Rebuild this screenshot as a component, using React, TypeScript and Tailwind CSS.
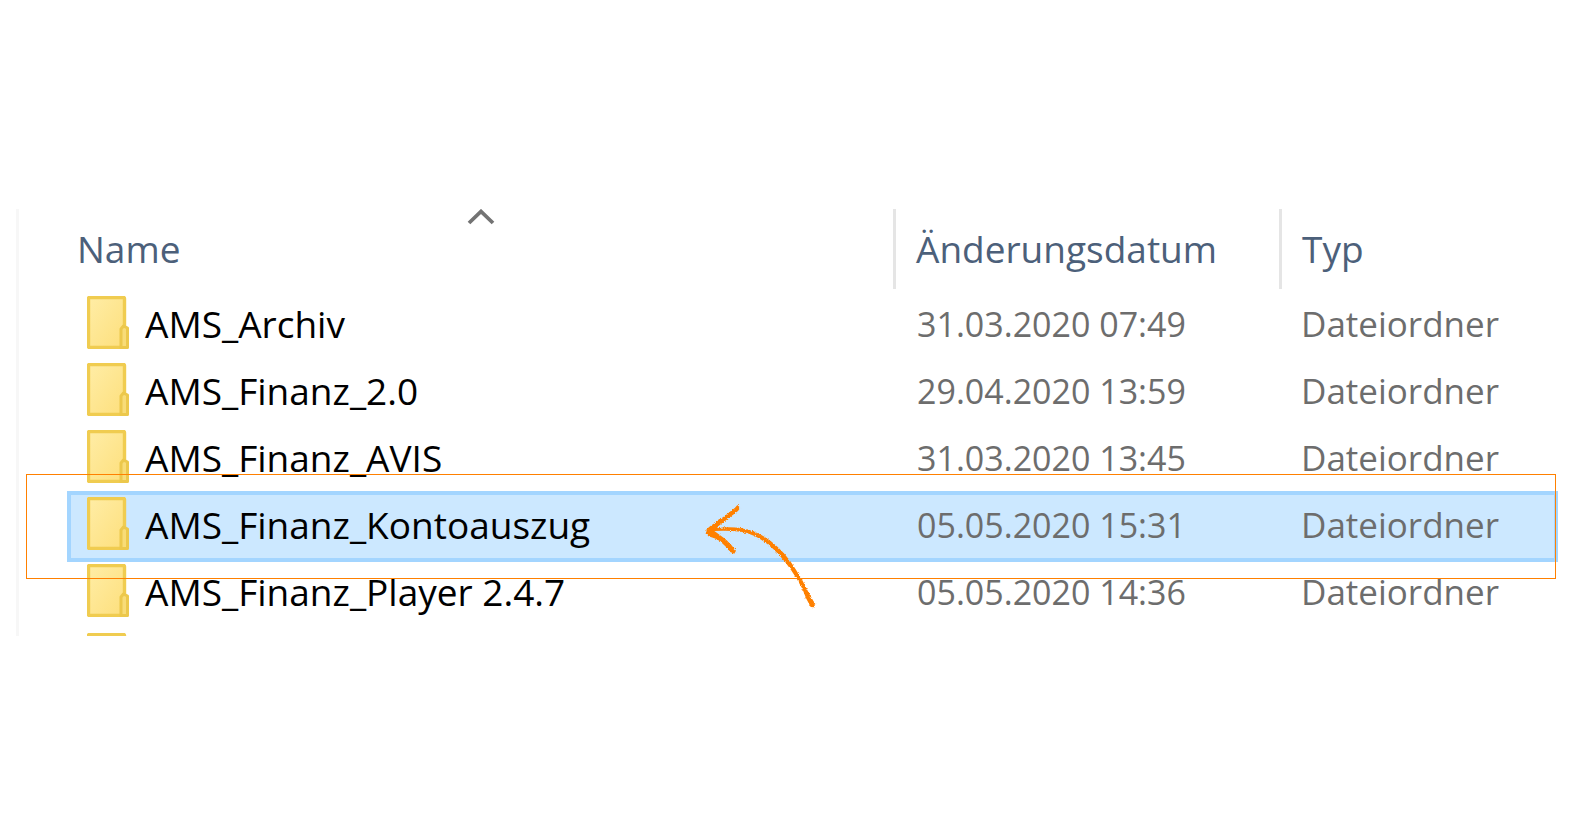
type Folder = {
  name: string
  date: string
  selected?: boolean
}

const folders: Folder[] = [
  { name: 'AMS_Archiv', date: '31.03.2020 07:49' },
  { name: 'AMS_Finanz_2.0', date: '29.04.2020 13:59' },
  { name: 'AMS_Finanz_AVIS', date: '31.03.2020 13:45' },
  { name: 'AMS_Finanz_Kontoauszug', date: '05.05.2020 15:31', selected: true },
  { name: 'AMS_Finanz_Player 2.4.7', date: '05.05.2020 14:36' },
]

const FolderIcon = () => (
  <svg width="42" height="53" viewBox="0 0 42 53" className="shrink-0" aria-hidden="true">
    <defs>
      <linearGradient id="folder" x1="0" y1="0" x2="1" y2="1">
        <stop offset="0" stopColor="#ffeda6" />
        <stop offset="1" stopColor="#fddf7c" />
      </linearGradient>
    </defs>
    <rect x="1.5" y="1.5" width="36" height="50" rx="1" fill="url(#folder)" stroke="#f0cc50" strokeWidth="3.4" />
    <path
      d="M34 51.5V33l2.5-3 4 2v19.5z"
      fill="#f8dc78"
      stroke="#ecc84c"
      strokeWidth="3"
      strokeLinejoin="round"
    />
  </svg>
)

const SortArrow = () => (
  <svg
    width="28"
    height="18"
    viewBox="0 0 28 18"
    className="absolute top-0 left-1/2 -translate-x-1/2"
    aria-hidden="true"
  >
    <path d="M2 14 14 2.5 26 14" fill="none" stroke="#737373" strokeWidth="3.8" />
  </svg>
)

// brush stroke arrow pointing at the selected folder
const HintArrow = () => (
  <svg
    width="120"
    height="112"
    viewBox="120 60 360 336"
    className="absolute top-[291px] left-[682px]"
    aria-hidden="true"
  >
    <filter id="rough" x="-10%" y="-10%" width="120%" height="120%">
      <feTurbulence type="fractalNoise" baseFrequency="0.4" numOctaves="3" seed="7" />
      <feDisplacementMap in="SourceGraphic" scale="9" xChannelSelector="R" yChannelSelector="G" />
    </filter>
    <g fill="#ff8000" filter="url(#rough)">
      <path d="M137 150Q141 141 158 131Q190 110 222 83L229 75L238 83L231 93Q204 114 187 127Q170 139 168 145Q204 138 248 146Q292 154 330 184Q374 218 404 268Q424 298 442 336Q456 362 463 372L459 382L449 381Q434 356 424 326Q408 296 390 270Q356 220 318 191Q280 162 240 155Q196 150 160 153Q178 166 194 178Q210 192 225 212L220 221L208 216Q196 200 182 188Q166 175 142 169Q134 160 137 150Z" />
    </g>
  </svg>
)

const Row = ({ folder }: { folder: Folder }) => (
  <tr
    className={
      folder.selected
        ? 'h-[67px] bg-[#cce8ff] outline-4 -outline-offset-2 outline-[#a3d5ff]'
        : 'h-[67px]'
    }
  >
    <td className="p-0 pt-1 pl-[18px] align-top">
      <div className="flex gap-4">
        <FolderIcon />
        <span className="text-[37px] leading-[56px] text-black">{folder.name}</span>
      </div>
    </td>
    <td className="p-0 pt-1 pl-6 align-top text-[34px] leading-[56px] text-[#6d6d6d]">{folder.date}</td>
    <td className="p-0 pt-1 pl-[22px] align-top text-[35px] leading-[56px] text-[#6d6d6d]">Dateiordner</td>
  </tr>
)

const App = () => (
  <main className="bg-white pt-[209px] pl-4 font-['Open_Sans','Noto_Sans',sans-serif]">
    <section className="relative h-[427px] overflow-hidden border-l-3 border-[#f7f7f7] pr-4 pl-[50px]">
      <table className="w-full table-fixed border-collapse whitespace-nowrap">
        <colgroup>
          <col />
          <col className="w-[386px]" />
          <col className="w-[277px]" />
        </colgroup>
        <thead>
          <tr className="h-[83px] text-left text-[37px] leading-[80px] text-[#4c607a]">
            <th className="relative p-0 align-top font-normal">
              <SortArrow />
              <button type="button" className="block pl-2">
                Name
              </button>
            </th>
            <th className="p-0 align-top font-normal">
              <button type="button" className="block border-l-3 border-[#e5e5e5] pl-5">
                Änderungsdatum
              </button>
            </th>
            <th className="p-0 align-top font-normal">
              <button type="button" className="block border-l-3 border-[#e5e5e5] pl-5">
                Typ
              </button>
            </th>
          </tr>
        </thead>
        <tbody>
          {folders.map((folder) => (
            <Row key={folder.name} folder={folder} />
          ))}
          <tr>
            <td className="p-0 pt-1.5 pl-[18px]">
              <FolderIcon />
            </td>
          </tr>
        </tbody>
      </table>
      <div className="absolute top-[265px] right-4 left-[7px] h-[105px] border border-[#ff8000]" />
      <HintArrow />
    </section>
  </main>
)

export default App
